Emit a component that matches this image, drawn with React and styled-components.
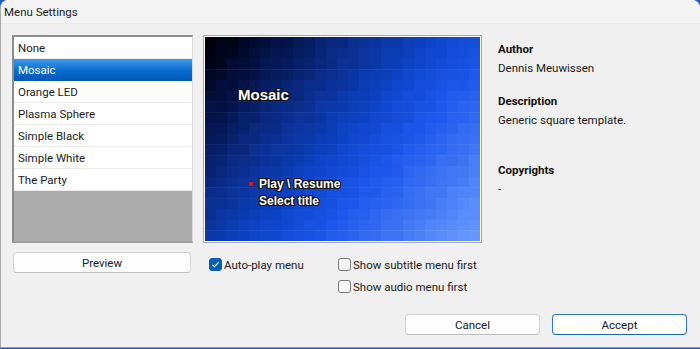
import React, { useState } from "react";
import styled, { createGlobalStyle } from "styled-components";

const GlobalStyle = createGlobalStyle`
  html, body {
    margin: 0;
    padding: 0;
    background: #1c5fc4;
  }
  #root {
    width: 700px;
    height: 349px;
  }
`;

const menus = [
  "None",
  "Mosaic",
  "Orange LED",
  "Plasma Sphere",
  "Simple Black",
  "Simple White",
  "The Party",
];

// tile colours for the mosaic preview
const COLS = 25;
const ROWS = 19;
const stops = [
  [0, [0, 0, 10]],
  [0.15, [4, 18, 70]],
  [0.3, [10, 42, 130]],
  [0.5, [13, 68, 200]],
  [0.66, [28, 88, 236]],
  [1, [104, 152, 255]],
];
function mix(t) {
  for (let i = 1; i < stops.length; i++) {
    if (t <= stops[i][0]) {
      const [t0, c0] = stops[i - 1];
      const [t1, c1] = stops[i];
      const k = (t - t0) / (t1 - t0);
      return c0.map((v, j) => v + (c1[j] - v) * k);
    }
  }
  return stops[stops.length - 1][1];
}
function rnd(i) {
  const x = Math.sin(i * 12.9898) * 43758.5453;
  return x - Math.floor(x);
}
const tiles = [];
for (let r = 0; r < ROWS; r++) {
  for (let c = 0; c < COLS; c++) {
    const u = c / (COLS - 1);
    const v = r / (ROWS - 1);
    const t = Math.min(1, Math.max(0, u * 0.6 + v * 0.4 + (rnd(r * COLS + c) - 0.5) * 0.035));
    const [R, G, B] = mix(t);
    tiles.push({ r, c, fill: `rgb(${R | 0},${G | 0},${B | 0})` });
  }
}

export default function App() {
  const [selected, setSelected] = useState("Mosaic");
  const [autoPlay, setAutoPlay] = useState(true);
  const [subFirst, setSubFirst] = useState(false);
  const [audioFirst, setAudioFirst] = useState(false);

  return (
    <>
      <GlobalStyle />
      <Window>
        <TitleBar>Menu Settings</TitleBar>
        <Body>
          <TopRow>
            <ListBox>
              {menus.map((m) => (
                <ListItem key={m} active={m === selected} onClick={() => setSelected(m)}>
                  {m}
                </ListItem>
              ))}
              <ListEmpty />
            </ListBox>

            <PreviewFrame>
              <svg width="275" height="204" viewBox="0 0 275 204" preserveAspectRatio="none">
                {tiles.map((t) => (
                  <rect
                    key={t.r + "-" + t.c}
                    x={(t.c * 275) / COLS}
                    y={(t.r * 204) / ROWS}
                    width={275 / COLS + 0.5}
                    height={204 / ROWS + 0.5}
                    fill={t.fill}
                  />
                ))}
              </svg>
              <ScreenTitle>Mosaic</ScreenTitle>
              <ScreenMenu>
                <ScreenItem bullet>Play \ Resume</ScreenItem>
                <ScreenItem>Select title</ScreenItem>
              </ScreenMenu>
            </PreviewFrame>

            <Info>
              <InfoBlock>
                <InfoLabel>Author</InfoLabel>
                <InfoValue>Dennis Meuwissen</InfoValue>
              </InfoBlock>
              <InfoBlock>
                <InfoLabel>Description</InfoLabel>
                <InfoValue>Generic square template.</InfoValue>
              </InfoBlock>
              <InfoBlock tall>
                <InfoLabel>Copyrights</InfoLabel>
                <InfoValue>-</InfoValue>
              </InfoBlock>
            </Info>
          </TopRow>

          <OptionsRow>
            <Button width="178px">Preview</Button>
            <CheckColumn>
              <Check onClick={() => setAutoPlay(!autoPlay)}>
                <Box checked={autoPlay}>
                  {autoPlay && (
                    <svg width="9" height="9" viewBox="0 0 9 9">
                      <path d="M1.5 4.8 L3.5 6.7 L7.6 2.3" fill="none" stroke="#fff" strokeWidth="1.1" />
                    </svg>
                  )}
                </Box>
                Auto-play menu
              </Check>
            </CheckColumn>
            <CheckColumn>
              <Check onClick={() => setSubFirst(!subFirst)}>
                <Box checked={subFirst} />
                Show subtitle menu first
              </Check>
              <Check onClick={() => setAudioFirst(!audioFirst)}>
                <Box checked={audioFirst} />
                Show audio menu first
              </Check>
            </CheckColumn>
          </OptionsRow>

          <Footer>
            <Button width="135px">Cancel</Button>
            <Button width="135px" primary>Accept</Button>
          </Footer>
        </Body>
      </Window>
    </>
  );
}

const uiFont = `"Roboto", "Noto Sans", sans-serif`;

const Window = styled.div`
  width: 700px;
  height: 348px;
  box-sizing: border-box;
  background: #f0f0f0;
  border-left: 1px solid #a8a8a8;
  border-bottom: 1px solid #9a9a9a;
  border-radius: 8px 8px 0 0;
  overflow: hidden;
  display: flex;
  flex-direction: column;
  font-family: ${uiFont};
  font-size: 11.5px;
  color: #1a1a1a;
`;

const TitleBar = styled.div`
  height: 24px;
  flex: none;
  box-sizing: border-box;
  padding: 5px 0 0 3px;
  background: #f3f3f3;
  border-bottom: 1px solid #ebebeb;
  font-size: 11.5px;
  color: #1b1b1b;
`;

const Body = styled.div`
  flex: 1;
  display: flex;
  flex-direction: column;
  padding: 11px 12px 0 11px;
`;

const TopRow = styled.div`
  display: flex;
  align-items: flex-start;
`;

const ListBox = styled.div`
  width: 181px;
  height: 208px;
  box-sizing: border-box;
  border-top: 2px solid #8c8c8c;
  border-left: 2px solid #8c8c8c;
  border-right: 1px solid #dadada;
  border-bottom: 2px solid #9c9c9c;
  background: #fff;
  display: flex;
  flex-direction: column;
`;

const ListItem = styled.div`
  height: 22px;
  flex: none;
  box-sizing: border-box;
  display: flex;
  align-items: center;
  padding-left: 4px;
  border-bottom: 1px solid ${(p) => (p.active ? "#0058b4" : "#ececec")};
  color: ${(p) => (p.active ? "#fff" : "#1a1a1a")};
  background: ${(p) => (p.active ? "linear-gradient(#3b9cec, #0a6ccf 55%, #0059b8)" : "#fff")};
  cursor: default;
`;

const ListEmpty = styled.div`
  flex: 1;
  background: #ababab;
`;

const PreviewFrame = styled.div`
  position: relative;
  width: 279px;
  height: 208px;
  margin-left: 10px;
  box-sizing: border-box;
  border: 1px solid #a9a9a9;
  outline: 1px solid #fff;
  outline-offset: -2px;
  padding: 1px;
  background: #fff;

  svg {
    display: block;
  }
`;

const outline = `
  text-shadow: -1px -1px 0 #111, 1px -1px 0 #111, -1px 1px 0 #111, 1px 1px 0 #111,
    0 1px 0 #111, 0 -1px 0 #111, 1px 0 0 #111, -1px 0 0 #111;
`;

const ScreenTitle = styled.div`
  position: absolute;
  left: 34px;
  top: 50px;
  font-family: "Liberation Sans", Arial, sans-serif;
  font-weight: 700;
  font-size: 15px;
  color: #fff;
  ${outline}
`;

const ScreenMenu = styled.div`
  position: absolute;
  left: 55px;
  top: 140px;
  display: flex;
  flex-direction: column;
  gap: 1px;
`;

const ScreenItem = styled.div`
  position: relative;
  font-family: "Liberation Sans", Arial, sans-serif;
  font-weight: 700;
  font-size: 12px;
  line-height: 16px;
  color: #fff;
  ${outline}

  &::before {
    content: "";
    display: ${(p) => (p.bullet ? "block" : "none")};
    position: absolute;
    left: -10px;
    top: 6px;
    width: 4px;
    height: 4px;
    background: #e01010;
    box-shadow: 0 0 1px #600;
  }
`;

const Info = styled.div`
  margin-left: 16px;
  padding-top: 6px;
  display: flex;
  flex-direction: column;
  gap: 16px;
`;

const InfoBlock = styled.div`
  display: flex;
  flex-direction: column;
  gap: 2px;
  margin-top: ${(p) => (p.tall ? "17px" : "0")};
`;

const InfoLabel = styled.div`
  font-weight: 700;
  line-height: 17px;
  color: #111;
`;

const InfoValue = styled.div`
  line-height: 17px;
`;

const OptionsRow = styled.div`
  display: flex;
  align-items: flex-start;
  margin-top: 9px;
  padding-left: 1px;
`;

const Button = styled.button`
  width: ${(p) => p.width};
  height: 21px;
  box-sizing: border-box;
  padding: 0;
  background: #fdfdfd;
  border: 1px solid ${(p) => (p.primary ? "#2a78c8" : "#d2d2d2")};
  border-bottom-color: ${(p) => (p.primary ? "#1a64b4" : "#bcbcbc")};
  border-radius: 4px;
  font-family: ${uiFont};
  font-size: 11.5px;
  color: #1a1a1a;
`;

const CheckColumn = styled.div`
  display: flex;
  flex-direction: column;
  gap: 5px;
  margin-left: 18px;
  padding-top: 4px;
  width: 111px;

  & + & {
    margin-left: 18px;
    width: auto;
  }
`;

const Check = styled.label`
  display: flex;
  align-items: center;
  gap: 2px;
  height: 17px;
  white-space: nowrap;
  cursor: default;
`;

const Box = styled.span`
  width: 13px;
  height: 13px;
  box-sizing: border-box;
  border-radius: 3px;
  display: flex;
  align-items: center;
  justify-content: center;
  background: ${(p) => (p.checked ? "#005fb8" : "#f6f6f6")};
  border: 1px solid ${(p) => (p.checked ? "#005fb8" : "#7a7a7a")};
`;

const Footer = styled.div`
  margin-top: auto;
  margin-bottom: 12px;
  display: flex;
  justify-content: flex-end;
  gap: 12px;
  padding-right: 1px;
`;
